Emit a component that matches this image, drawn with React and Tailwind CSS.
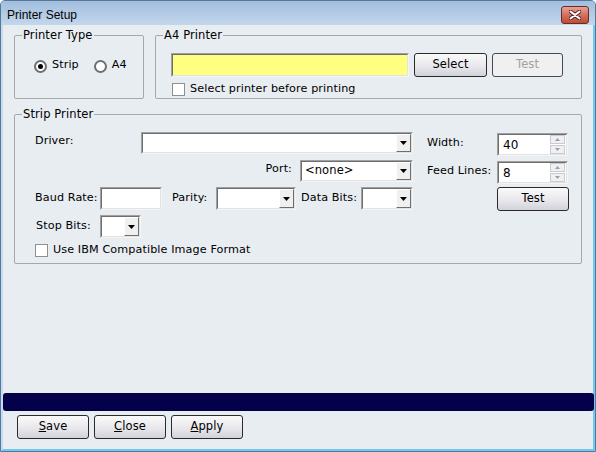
import React from 'react';

const font = "font-['DejaVu_Sans','Liberation_Sans',sans-serif]";

const Sunken = ({ className = '', children }) => (
  <div className={`border border-t-[#a0a0a0] border-l-[#a0a0a0] border-b-[#f4f4f4] border-r-[#f4f4f4] ${className}`}>
    <div className="h-full w-full border border-t-[#6e6e6e] border-l-[#6e6e6e] border-b-[#e3e3e3] border-r-[#e3e3e3] flex items-center">
      {children}
    </div>
  </div>
);

const Arrow = () => (
  <svg width="7" height="4" viewBox="0 0 7 4">
    <path d="M0 0h7L3.5 4z" fill="#000" />
  </svg>
);

const Combo = ({ className = '', value }) => (
  <Sunken className={`bg-white ${className}`}>
    <span className="flex-1 pl-[3px] truncate text-[11.5px]">{value}</span>
    <div className="h-full w-[15px] bg-[#f0f0f0] border border-t-white border-l-white border-r-[#6e6e6e] border-b-[#6e6e6e] flex items-center justify-center">
      <Arrow />
    </div>
  </Sunken>
);

const Spin = ({ value }) => (
  <Sunken className="bg-white w-[71px] h-[23px]">
    <span className="flex-1 pl-[4px] text-[12px]">{value}</span>
    <div className="h-full w-[16px] flex flex-col gap-[1px] pr-[1px]">
      <div className="flex-1 bg-[#eef0f2] border border-[#c8ccd2] flex items-center justify-center">
        <svg width="5" height="3" viewBox="0 0 5 3"><path d="M0 3L2.5 0 5 3z" fill="#9aa0a8" /></svg>
      </div>
      <div className="flex-1 bg-[#eef0f2] border border-[#c8ccd2] flex items-center justify-center">
        <svg width="5" height="3" viewBox="0 0 5 3"><path d="M0 0h5L2.5 3z" fill="#9aa0a8" /></svg>
      </div>
    </div>
  </Sunken>
);

const Button = ({ className = '', disabled, children }) => (
  <div
    className={`h-[24px] rounded-[3px] border flex items-center justify-center text-[11.5px] ${
      disabled
        ? 'border-[#4a4a4a] bg-[#f0f0f0] text-[#a0a0a0]'
        : 'border-[#2a2a2a] bg-linear-to-b from-[#fafafa] via-[#eaeaee] to-[#d2d2da] text-black'
    } ${className}`}
  >
    {children}
  </div>
);

const Check = () => (
  <div className="w-[13px] h-[13px] bg-white border border-[#8e8f8f] shrink-0" />
);

const Radio = ({ checked }) => (
  <div className="w-[13px] h-[13px] rounded-full bg-white border-2 border-[#6f6f6f] flex items-center justify-center shrink-0">
    {checked && <div className="w-[5px] h-[5px] rounded-full bg-black" />}
  </div>
);

const Group = ({ title, className = '', children }) => (
  <fieldset className={`border border-[#a8a8a8] rounded-[2px] ${className}`}>
    <legend className="ml-[7px] px-[1px] text-[11.5px] leading-[14px]">{title}</legend>
    {children}
  </fieldset>
);

const App = () => {
  return (
    <div className={`w-[596px] h-[452px] bg-[#b9cfe6] border border-[#55779b] rounded-t-[5px] flex flex-col overflow-hidden text-[11.2px] tracking-[0.1px] whitespace-nowrap text-black ${font}`}>
      {/* Title bar */}
      <div className="h-[24px] shrink-0 bg-linear-to-b from-[#a2bedd] to-[#c3d7ec] flex items-center justify-between pl-[6px] pr-[6px]">
        <span className="text-[12px] tracking-normal pt-[3px] font-['Liberation_Sans',sans-serif]">Printer Setup</span>
        <div className="w-[28px] h-[18px] mt-[4px] rounded-[3px] border border-[#6a2a2a] bg-linear-to-b from-[#e7a395] via-[#d2705c] to-[#c04a33] flex items-center justify-center">
          <svg width="12" height="10" viewBox="0 0 12 10">
            <path d="M1.5 1.5L10.5 8.5M10.5 1.5L1.5 8.5" stroke="#5a2a2a" strokeWidth="4" strokeLinecap="round" />
            <path d="M1.5 1.5L10.5 8.5M10.5 1.5L1.5 8.5" stroke="#fff" strokeWidth="2" strokeLinecap="round" />
          </svg>
        </div>
      </div>

      {/* Body */}
      <div className="flex-1 flex flex-col bg-[#e8edf2] border-l-2 border-l-[#c9dcee] border-r-2 border-r-[#6ccbee] border-b-2 border-b-[#6ccbee]">
        {/* Top row */}
        <div className="flex pt-[3px] pl-[11px]">
          <Group title="Printer Type" className="w-[130px] h-[71px]">
            <div className="flex items-center mt-[17px] pl-[19px]">
              <Radio checked />
              <span className="ml-[5px] -mt-[2px]">Strip</span>
              <div className="ml-[15px]"><Radio /></div>
              <span className="ml-[5px] -mt-[2px]">A4</span>
            </div>
          </Group>
          <Group title="A4 Printer" className="w-[427px] h-[71px] ml-[11px]">
            <div className="pl-[15px]">
              <div className="flex mt-[11px]">
                <Sunken className="w-[238px] h-[24px] bg-[#ffff80]" />
                <Button className="w-[73px] ml-[5px]">Select</Button>
                <Button disabled className="w-[71px] ml-[5px]">Test</Button>
              </div>
              <div className="flex items-center mt-[4px] pl-[1px]">
                <Check />
                <span className="ml-[5px]">Select printer before printing</span>
              </div>
            </div>
          </Group>
        </div>

        {/* Strip Printer */}
        <div className="pl-[11px] mt-[8px]">
          <Group title="Strip Printer" className="w-[568px] h-[157px]">
            <div className="flex pl-[20px]">
              {/* Left column */}
              <div className="w-[379px] flex flex-col">
                <div className="flex mt-[11px] h-[22px]">
                  <span className="w-[106px] pt-[1px]">Driver:</span>
                  <Combo className="w-[272px] h-[22px]" />
                </div>
                <div className="flex justify-end items-center gap-[8px] mt-[6px] pr-[1px]">
                  <span className="-mt-[4px]">Port:</span>
                  <Combo className="w-[113px] h-[22px]" value="<none>" />
                </div>
                <div className="flex items-center mt-[5px] h-[23px]">
                  <span className="w-[65px]">Baud Rate:</span>
                  <Sunken className="w-[62px] h-[23px] bg-white" />
                  <span className="w-[44px] ml-[10px]">Parity:</span>
                  <Combo className="w-[80px] h-[23px]" />
                  <span className="w-[60px] ml-[5px]">Data Bits:</span>
                  <Combo className="w-[52px] h-[23px]" />
                </div>
                <div className="flex items-center mt-[5px] h-[23px] pl-[1px]">
                  <span className="w-[64px]">Stop Bits:</span>
                  <Combo className="w-[41px] h-[23px]" />
                </div>
                <div className="flex items-center mt-[4px]">
                  <Check />
                  <span className="ml-[5px]">Use IBM Compatible Image Format</span>
                </div>
              </div>

              {/* Right column */}
              <div className="ml-[13px] flex flex-col">
                <div className="flex items-center mt-[12px]">
                  <span className="w-[70px] -mt-[3px]">Width:</span>
                  <Spin value="40" />
                </div>
                <div className="flex items-center mt-[5px]">
                  <span className="w-[70px] -mt-[3px]">Feed Lines:</span>
                  <Spin value="8" />
                </div>
                <div className="flex mt-[3px] pl-[70px]">
                  <Button className="w-[72px]">Test</Button>
                </div>
              </div>
            </div>
          </Group>
        </div>

        <div className="flex-1" />

        {/* Progress bar */}
        <div className="h-[18px] bg-[#04004a] rounded-[3px] mr-[-1px]" />

        {/* Buttons */}
        <div className="flex gap-[5px] mt-[4px] mb-[10px] pl-[14px]">
          <Button className="w-[72px]"><span><u>S</u>ave</span></Button>
          <Button className="w-[72px]"><span><u>C</u>lose</span></Button>
          <Button className="w-[72px]"><span><u>A</u>pply</span></Button>
        </div>
      </div>
    </div>
  );
};

export default App;
